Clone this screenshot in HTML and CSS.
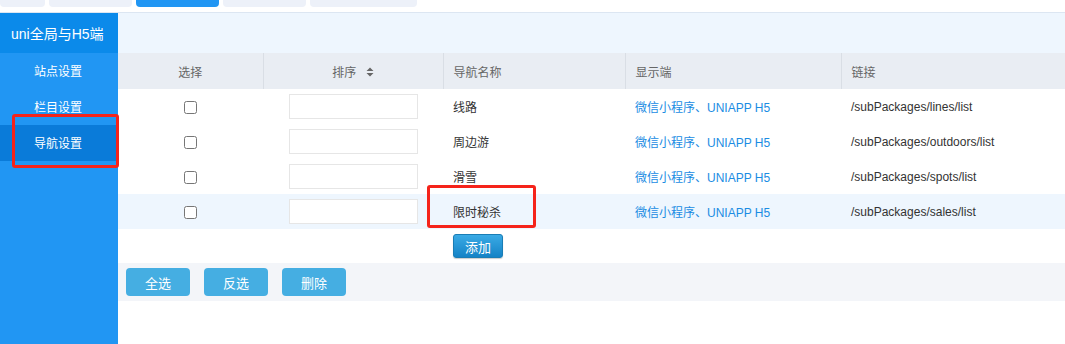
FILE: index.html
```html
<!DOCTYPE html>
<html lang="zh">
<head>
<meta charset="utf-8">
<link rel="stylesheet" href="styles.css">
</head>
<body>
<div class="tabs">
  <span class="tab t1"></span>
  <span class="tab t2"></span>
  <span class="tab t2 active"></span>
  <span class="tab t2"></span>
  <span class="tab t5"></span>
</div>
<div class="layout">
  <aside class="sidebar">
    <div class="side-title">uni全局与H5端</div>
    <ul class="menu">
      <li class="menu-item">站点设置</li>
      <li class="menu-item">栏目设置</li>
      <li class="menu-item active">导航设置</li>
    </ul>
    <span class="mark mark-menu"></span>
  </aside>
  <main class="content">
    <div class="content-head"></div>
    <table class="grid">
      <colgroup>
        <col class="c1"><col class="c2"><col class="c3"><col class="c4"><col class="c5">
      </colgroup>
      <thead>
        <tr>
          <th class="center">选择</th>
          <th class="center sep">排序 <span class="sort"><svg width="8" height="10" viewBox="0 0 8 10"><path d="M4 0.5 L7.5 4 L0.5 4 Z M4 9.5 L7.5 6 L0.5 6 Z" fill="#666"/></svg></span></th>
          <th class="sep">导航名称</th>
          <th class="sep">显示端</th>
          <th class="sep">链接</th>
        </tr>
      </thead>
      <tbody>
        <tr>
          <td class="center"><input type="checkbox" class="chk"></td>
          <td class="center"><input type="text" class="order"></td>
          <td>线路</td>
          <td class="link">微信小程序、UNIAPP H5</td>
          <td>/subPackages/lines/list</td>
        </tr>
        <tr>
          <td class="center"><input type="checkbox" class="chk"></td>
          <td class="center"><input type="text" class="order"></td>
          <td>周边游</td>
          <td class="link">微信小程序、UNIAPP H5</td>
          <td>/subPackages/outdoors/list</td>
        </tr>
        <tr>
          <td class="center"><input type="checkbox" class="chk"></td>
          <td class="center"><input type="text" class="order"></td>
          <td>滑雪</td>
          <td class="link">微信小程序、UNIAPP H5</td>
          <td>/subPackages/spots/list</td>
        </tr>
        <tr class="hl">
          <td class="center"><input type="checkbox" class="chk"></td>
          <td class="center"><input type="text" class="order"></td>
          <td class="name-cell">限时秘杀<span class="mark mark-name"></span></td>
          <td class="link">微信小程序、UNIAPP H5</td>
          <td>/subPackages/sales/list</td>
        </tr>
        <tr class="add-row">
          <td></td>
          <td></td>
          <td><button class="btn-add">添加</button></td>
          <td></td>
          <td></td>
        </tr>
      </tbody>
    </table>
    <div class="footer-bar">
      <button class="btn">全选</button>
      <button class="btn">反选</button>
      <button class="btn">删除</button>
    </div>
  </main>
</div>
</body>
</html>
```
FILE: styles.css
```css
* { box-sizing: border-box; }
html, body { margin: 0; padding: 0; }
body {
  font-family: "Liberation Sans", "Noto Sans CJK SC", sans-serif;
  font-size: 12px;
  color: #333;
  background: #fff;
  height: 344px;
  overflow: hidden;
}
.tabs {
  height: 13px;
  display: flex;
  gap: 4px;
  border-bottom: 1px solid #dce6f2;
}
.tab {
  height: 7px;
  background: #edf1f9;
  border-radius: 0 0 4px 4px;
}
.tab.t1 { width: 45px; }
.tab.t2 { width: 83px; }
.tab.t5 { width: 107px; }
.tab.active { background: #2196f3; }

.layout {
  display: flex;
  height: 331px;
}
.sidebar {
  position: relative;
  width: 118px;
  flex: none;
  background: #2196f3;
}
.side-title {
  height: 40px;
  background: #0b8aea;
  color: #fff;
  font-size: 14px;
  line-height: 42px;
  padding-left: 11px;
}
.menu {
  list-style: none;
  margin: 0;
  padding: 0;
}
.menu-item {
  height: 36px;
  line-height: 38px;
  color: #fff;
  font-size: 12px;
  padding-left: 34px;
}
.menu-item.active { background: #0a7bd9; }

.mark {
  position: absolute;
  border: 3px solid #f5231a;
  border-radius: 3px;
}
.mark-menu { left: 12px; top: 101px; width: 107px; height: 54px; }

.content {
  flex: 1;
  min-width: 0;
}
.content-head {
  height: 40px;
  background: #eef6fe;
}
.grid {
  width: 100%;
  border-collapse: collapse;
  table-layout: fixed;
}
.c1 { width: 145px; }
.c2 { width: 180px; }
.c3 { width: 182px; }
.c4 { width: 216px; }
.grid th {
  height: 36px;
  background: #e9edf3;
  color: #666;
  font-weight: normal;
  text-align: left;
  padding: 0 10px;
}
.grid th.sep { border-left: 1px solid #d9dee5; }
.grid td {
  height: 35px;
  padding: 0 10px;
  white-space: nowrap;
}
.grid tr.add-row td { height: 34px; }
.grid th.center, .grid td.center { text-align: center; padding: 0; }
.grid tr.hl td { background: #eef6fe; }
.sort { display: inline-block; vertical-align: middle; margin-left: 6px; position: relative; top: -1px; }
.sort svg { display: block; }
.chk {
  margin: 0;
  width: 13px;
  height: 13px;
  vertical-align: middle;
}
.order {
  width: 129px;
  height: 25px;
  border: 1px solid #e6e6e6;
  margin: 0;
  padding: 0 4px;
  vertical-align: middle;
  outline: none;
}
.link { color: #1b8ce3; }
.name-cell { position: relative; }
.mark-name { left: -16px; top: -9px; width: 109px; height: 43px; }

.btn-add {
  width: 50px;
  height: 24px;
  border: 1px solid #1a7db5;
  border-radius: 3px;
  background: linear-gradient(#3aaae5, #1583c6);
  color: #fff;
  font-family: inherit;
  font-size: 13px;
  padding: 0;
  box-shadow: 0 1px 1px rgba(0,0,0,0.2);
}
.footer-bar {
  height: 38px;
  background: #f3f5f9;
  display: flex;
  align-items: center;
  gap: 14px;
  padding-left: 8px;
}
.btn {
  width: 64px;
  height: 28px;
  border: none;
  border-radius: 4px;
  background: #45aee2;
  color: #fff;
  font-family: inherit;
  font-size: 13px;
  padding: 0;
}
```
